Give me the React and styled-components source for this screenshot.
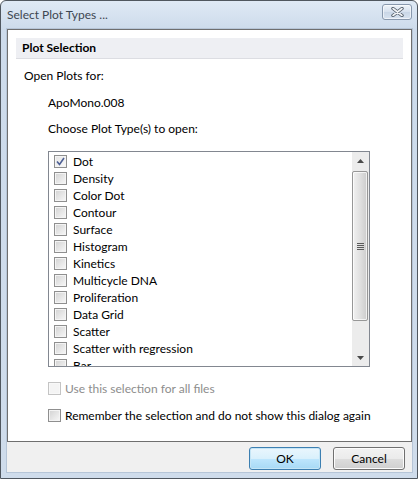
import React from 'react'
import styled, { createGlobalStyle } from 'styled-components'

const plotTypes = [
    'Dot', 'Density', 'Color Dot', 'Contour', 'Surface', 'Histogram', 'Kinetics',
    'Multicycle DNA', 'Proliferation', 'Data Grid', 'Scatter', 'Scatter with regression', 'Bar',
]

const GlobalStyle = createGlobalStyle`
    html, body {
        margin: 0;
        padding: 0;
        background: #ffffff;
    }
    body {
        font-family: 'Segoe UI', Lato, 'Noto Sans', sans-serif;
        font-size: 12px;
        color: #000;
    }
`

const CheckMark = () => (
    <svg width="9" height="9" viewBox="0 0 9 9">
        <path d="M1 4.5 L3.5 7.5 L8 1" fill="none" stroke="#4d5f94" strokeWidth="1.6" />
    </svg>
)

const CloseGlyph = () => (
    <svg width="13" height="10" viewBox="0 0 13 10">
        <path d="M2 1.5 L11 8.5 M11 1.5 L2 8.5" stroke="#525c68" strokeWidth="3.4" strokeLinecap="round" />
        <path d="M2 1.5 L11 8.5 M11 1.5 L2 8.5" stroke="#f2f4f7" strokeWidth="1.6" strokeLinecap="round" />
    </svg>
)

const Arrow = ({ up }) => (
    <svg width="7" height="4" viewBox="0 0 7 4">
        <path d={up ? 'M0 4 L3.5 0 L7 4 Z' : 'M0 0 L7 0 L3.5 4 Z'} fill="#4a4a4a" />
    </svg>
)

const App = () => {
    const [checked, setChecked] = React.useState({ Dot: true })
    const [remember, setRemember] = React.useState(false)

    const toggle = (name) => setChecked(prev => ({ ...prev, [name]: !prev[name] }))

    return (
        <>
            <GlobalStyle />
            <Window>
                <TitleBar>
                    <Title>Select Plot Types ...</Title>
                    <CloseButton><CloseGlyph /></CloseButton>
                </TitleBar>
                <Client>
                    <Panel>
                        <Header>Plot Selection</Header>
                        <Label $indent={8} $top={9}>Open Plots for:</Label>
                        <Label $indent={32} $top={11}>ApoMono.008</Label>
                        <Label $indent={32} $top={10}>Choose Plot Type(s) to open:</Label>
                        <ListBox>
                            <Rows>
                                {plotTypes.map(name => (
                                    <Row key={name} onClick={() => toggle(name)}>
                                        <Box $checked={!!checked[name]}>{checked[name] && <CheckMark />}</Box>
                                        {name}
                                    </Row>
                                ))}
                            </Rows>
                            <ScrollBar>
                                <ScrollButton><Arrow up /></ScrollButton>
                                <Track>
                                    <Thumb><Grip /></Thumb>
                                </Track>
                                <ScrollButton><Arrow /></ScrollButton>
                            </ScrollBar>
                        </ListBox>
                        <Option $disabled $top={13}>
                            <Box $disabled />
                            Use this selection for all files
                        </Option>
                        <Option $top={11} onClick={() => setRemember(r => !r)}>
                            <Box $checked={remember}>{remember && <CheckMark />}</Box>
                            Remember the selection and do not show this dialog again
                        </Option>
                    </Panel>
                    <ButtonRow>
                        <Button $primary>OK</Button>
                        <Button>Cancel</Button>
                    </ButtonRow>
                </Client>
            </Window>
        </>
    )
}

const Window = styled.div`
    width: 418px;
    height: 479px;
    box-sizing: border-box;
    border: 1px solid #50575f;
    border-radius: 6px 6px 0 0;
    background: linear-gradient(to bottom, #dfe9f5 0px, #cddbeb 28px, #cfdceb 100%);
    display: flex;
    flex-direction: column;
    padding: 0 5px 6px 6px;
`
const TitleBar = styled.div`
    height: 28px;
    flex: none;
    display: flex;
    align-items: center;
    justify-content: space-between;
`
const Title = styled.div`
    font-size: 12px;
    color: #3d4650;
    margin-top: -1px;
`
const CloseButton = styled.div`
    width: 28px;
    height: 14px;
    margin-top: -6px;
    border: 1px solid #8898ad;
    border-radius: 3px;
    background: linear-gradient(to bottom, #eef3f9, #d6e1ee 50%, #c9d6e6 51%, #d8e3f0);
    display: flex;
    align-items: center;
    justify-content: center;
    box-shadow: inset 0 0 0 1px rgba(255,255,255,0.6);
`
const Client = styled.div`
    flex: 1;
    background: #f0f0f0;
    display: flex;
    flex-direction: column;
    box-shadow: 0 0 0 1px #b6c5d7;
`
const Panel = styled.div`
    height: 413px;
    box-sizing: border-box;
    flex: none;
    background: #ffffff;
    border: 1px solid #6f6f6f;
    padding: 8px 8px 0 8px;
    display: flex;
    flex-direction: column;
`
const Header = styled.div`
    height: 21px;
    box-sizing: border-box;
    background: #eeeff3;
    border-bottom: 1px solid #dcdde2;
    font-weight: bold;
    padding-left: 6px;
    line-height: 20px;
`
const Label = styled.div`
    line-height: 16px;
    margin-top: ${p => p.$top}px;
    padding-left: ${p => p.$indent}px;
`
const ListBox = styled.div`
    margin: 14px 0 0 32px;
    width: 322px;
    height: 216px;
    box-sizing: border-box;
    border: 1px solid #828790;
    display: flex;
    overflow: hidden;
`
const Rows = styled.div`
    flex: 1;
    padding: 1px 0 0 5px;
    overflow: hidden;
`
const Row = styled.div`
    height: 17px;
    display: flex;
    align-items: center;
    gap: 6px;
    white-space: nowrap;
    cursor: default;
`
const Box = styled.span`
    width: 13px;
    height: 13px;
    box-sizing: border-box;
    flex: none;
    border: 1px solid ${p => p.$disabled ? '#c4c4c4' : '#8f8f8f'};
    background: ${p => p.$disabled
        ? '#f4f4f4'
        : p.$checked
            ? 'linear-gradient(135deg, #e4e4e4, #fafafa)'
            : 'linear-gradient(135deg, #d2d2d2, #f8f8f8)'};
    box-shadow: inset 0 0 0 1px ${p => p.$disabled ? '#f8f8f8' : '#f4f4f4'};
    display: flex;
    align-items: center;
    justify-content: center;
`
const ScrollBar = styled.div`
    width: 17px;
    flex: none;
    background: #ececec;
    display: flex;
    flex-direction: column;
`
const ScrollButton = styled.div`
    height: 17px;
    flex: none;
    display: flex;
    align-items: center;
    justify-content: center;
`
const Track = styled.div`
    flex: 1;
    padding: 2px 1px 0 0;
`
const Thumb = styled.div`
    height: 150px;
    box-sizing: border-box;
    border: 1px solid #979797;
    border-radius: 2px;
    background: linear-gradient(to right, #f1f1f1, #e0e0e0 50%, #cccccc);
    box-shadow: inset 0 0 0 1px rgba(255,255,255,0.7);
    display: flex;
    align-items: center;
    justify-content: center;
`
const Grip = styled.div`
    width: 7px;
    height: 7px;
    background: repeating-linear-gradient(to bottom, #5a5a5a 0, #5a5a5a 1px, transparent 1px, transparent 2px);
`
const Option = styled.div`
    margin: ${p => p.$top}px 0 0 32px;
    height: 16px;
    display: flex;
    align-items: center;
    gap: 4px;
    white-space: nowrap;
    color: ${p => p.$disabled ? '#8d8d8d' : '#000'};
    cursor: default;
`
const ButtonRow = styled.div`
    flex: 1;
    display: flex;
    justify-content: flex-end;
    align-items: flex-start;
    gap: 12px;
    padding: 5px 7px 0 0;
`
const Button = styled.button`
    width: 72px;
    height: 23px;
    border: 1px solid ${p => p.$primary ? '#3c7fb1' : '#707070'};
    border-radius: 3px;
    font: inherit;
    color: #000;
    background: ${p => p.$primary
        ? 'linear-gradient(to bottom, #eaf6fd, #d9f0fc 50%, #bee6fd 51%, #a7d9f5)'
        : 'linear-gradient(to bottom, #f2f2f2, #ebebeb 50%, #dddddd 51%, #cfcfcf)'};
    box-shadow: inset 0 0 0 1px ${p => p.$primary ? '#c4e5f6' : '#fcfcfc'};
    padding: 0;
`

export default App
